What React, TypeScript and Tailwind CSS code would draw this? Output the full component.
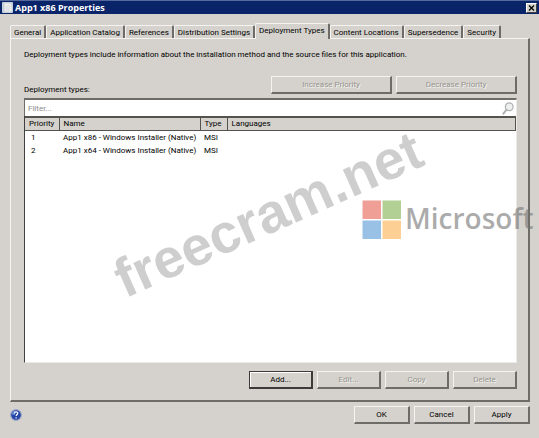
import { useState } from 'react'
import clsx from 'clsx'

interface DeploymentType {
  priority: number
  name: string
  type: string
  languages: string
}

const tabs = [
  'General',
  'Application Catalog',
  'References',
  'Distribution Settings',
  'Deployment Types',
  'Content Locations',
  'Supersedence',
  'Security',
]

const deploymentTypes: DeploymentType[] = [
  { priority: 1, name: 'App1 x86 - Windows Installer (Native)', type: 'MSI', languages: '' },
  { priority: 2, name: 'App1 x64 - Windows Installer (Native)', type: 'MSI', languages: '' },
]

interface DialogButtonProps {
  label: string
  className: string
  disabled?: boolean
  isDefault?: boolean
}

function DialogButton({ label, className, disabled, isDefault }: DialogButtonProps) {
  return (
    <button
      type="button"
      disabled={disabled}
      className={clsx(
        'h-[18px] border-t border-r-2 border-b-2 border-l bg-[#d5d2cd] text-center leading-[15px]',
        isDefault
          ? 'border-[#3c3b39] shadow-[inset_1px_1px_0_#fff]'
          : 'border-t-[#f4f3f0] border-r-[#6e6c68] border-b-[#6e6c68] border-l-[#f4f3f0]',
        disabled ? 'text-[#96948f] [text-shadow:1px_1px_0_#f4f3f0]' : 'text-black',
        className,
      )}
    >
      {label}
    </button>
  )
}

function AppIcon() {
  return (
    <svg viewBox="0 0 11 11" className="h-[11px] w-[11px]" aria-hidden="true">
      <rect width="11" height="11" rx="1" fill="#c9d3e2" />
      <path d="M2 1h6l2 2v7H2z" fill="#eef0f0" stroke="#b9bfca" strokeWidth="0.6" />
      <path d="M3.5 4h5M3.5 6h5M3.5 8h4" stroke="#c5c9d0" strokeWidth="0.7" />
    </svg>
  )
}

function SearchIcon() {
  return (
    <svg viewBox="0 0 12 13" className="h-[13px] w-3" aria-hidden="true">
      <circle cx="7.2" cy="4.8" r="3.9" fill="#eeefef" stroke="#b0b0b0" strokeWidth="1.2" />
      <path d="M4.4 7.8 1.4 11.6" stroke="#b0b0b0" strokeWidth="2" strokeLinecap="round" />
    </svg>
  )
}

function HelpIcon() {
  return (
    <svg viewBox="0 0 12 12" className="h-3 w-3" aria-hidden="true">
      <circle cx="6" cy="6" r="5.4" fill="#2344a6" stroke="#a3abc6" strokeWidth="1.2" />
      <path d="M1.8 5.4a4.2 4 0 0 1 4.2-3.8L4.6 6z" fill="#6488d8" />
      <path
        d="M4.4 4.6c0-2.3 3.4-2.2 3.4-.3 0 1.1-1.6 1.2-1.6 2.6M6.1 8.2v1.2"
        fill="none"
        stroke="#fff"
        strokeWidth="1.3"
      />
    </svg>
  )
}

function MicrosoftMark() {
  return (
    <div className="pointer-events-none absolute top-[200px] left-[362px] flex items-start gap-1">
      <svg viewBox="0 0 39 39" className="h-[39px] w-[39px]" aria-hidden="true">
        <rect x="0.5" y="0.5" width="18.5" height="18.5" fill="#ef9f96" />
        <rect x="20.5" y="0.5" width="18.5" height="18.5" fill="#b2cf94" />
        <rect x="0.5" y="20.5" width="18.5" height="18.5" fill="#99c1e5" />
        <rect x="20.5" y="20.5" width="18.5" height="18.5" fill="#fccf94" />
      </svg>
      <span className="font-['Open_Sans','Noto_Sans',sans-serif] text-[28px] leading-[37px] font-semibold text-[#737373]/60">
        Microsoft
      </span>
    </div>
  )
}

function App() {
  const [activeTab, setActiveTab] = useState('Deployment Types')
  const [filter, setFilter] = useState('')

  const rows = deploymentTypes.filter(d => d.name.toLowerCase().includes(filter.toLowerCase()))

  return (
    <div className="relative flex min-h-screen flex-col overflow-hidden bg-[#d5d2cd] font-[Roboto,'Liberation_Sans',sans-serif] text-[8px] leading-[13px] text-black">
      <header className="flex h-[14px] items-center gap-0.5 border-t border-[#56699c] bg-[#0a246a] pr-0.5 pl-0.5">
        <AppIcon />
        <h1 className="flex-1 font-['Open_Sans',sans-serif] text-[9px] leading-[12px] font-bold text-white">
          App1 x86 Properties
        </h1>
        <button
          type="button"
          aria-label="Close"
          className="flex h-[10px] w-[11px] items-center justify-center border border-t-white border-r-[#404040] border-b-[#404040] border-l-white bg-[#d5d2cd]"
        >
          <svg viewBox="0 0 7 6" className="h-1.5 w-[7px]" aria-hidden="true">
            <path d="M1 0.5 6 5.5M6 0.5 1 5.5" stroke="#000" strokeWidth="1.3" />
          </svg>
        </button>
      </header>

      <main className="flex flex-1 flex-col pt-2.5 pr-[9px] pl-2.5">
        <div role="tablist" className="flex h-[14px] items-end">
          {tabs.map(tab => (
            <button
              key={tab}
              type="button"
              role="tab"
              aria-selected={tab === activeTab}
              onClick={() => setActiveTab(tab)}
              className={clsx(
                'rounded-t-xs border-t border-r-2 border-l border-t-[#f4f3f0] border-r-[#6e6c68] border-l-[#f4f3f0] px-[3px] leading-[14px] whitespace-nowrap',
                tab === activeTab ? 'z-10 -mb-px h-4 bg-[#d5d2cd] pb-px' : 'h-[13px]',
              )}
            >
              {tab}
            </button>
          ))}
        </div>

        <section
          role="tabpanel"
          className="flex flex-1 flex-col border-t border-r-2 border-b-2 border-l border-t-[#f4f3f0] border-r-[#6e6c68] border-b-[#6e6c68] border-l-[#f4f3f0] pt-[9px] pr-[11px] pb-[11px] pl-[13px]"
        >
          <p>
            Deployment types include information about the installation method and the source files for
            this application.
          </p>

          <div className="mt-[15px] flex items-end justify-between">
            <label htmlFor="filter">Deployment types:</label>
            <div className="mb-0.5 flex gap-1">
              <DialogButton label="Increase Priority" className="w-[121px]" disabled />
              <DialogButton label="Decrease Priority" className="w-[121px]" disabled />
            </div>
          </div>

          <div className="mt-0.5 flex h-[18px] items-center border-t-2 border-r border-l border-t-[#6e6c68] border-r-[#eceae6] border-l-[#6e6c68] bg-white pr-0.5 pl-[3px]">
            <input
              id="filter"
              type="text"
              placeholder="Filter..."
              value={filter}
              onChange={e => setFilter(e.target.value)}
              className="flex-1 outline-none placeholder:text-[#8c8c8c]"
            />
            <SearchIcon />
          </div>

          <div className="flex-1 border-r border-b border-l border-r-[#eceae6] border-b-[#eceae6] border-l-[#404040] bg-white">
            <table className="w-full table-fixed border-collapse">
              <thead>
                <tr className="h-3 border-t-2 border-b border-[#55534f] bg-[#d5d2cd] text-left leading-[12px]">
                  <th className="w-[34px] border-r border-[#55534f] p-0 pl-1 font-normal">Priority</th>
                  <th className="w-[141px] border-r border-[#55534f] p-0 pl-1 font-normal">Name</th>
                  <th className="w-[27px] border-r border-[#55534f] p-0 pl-1 font-normal">Type</th>
                  <th className="border-r border-[#55534f] p-0 pl-1 font-normal">Languages</th>
                </tr>
              </thead>
              <tbody>
                {rows.map(row => (
                  <tr key={row.priority} className="h-[13px] whitespace-nowrap">
                    <td className="p-0 pl-1.5">{row.priority}</td>
                    <td className="p-0 pl-1">{row.name}</td>
                    <td className="p-0 pl-1">{row.type}</td>
                    <td className="p-0 pl-1">{row.languages}</td>
                  </tr>
                ))}
              </tbody>
            </table>
          </div>

          <div className="mt-2 flex justify-end gap-1">
            <DialogButton label="Add..." className="w-16" isDefault />
            <DialogButton label="Edit..." className="w-16" disabled />
            <DialogButton label="Copy" className="w-16" disabled />
            <DialogButton label="Delete" className="w-16" disabled />
          </div>
        </section>

        <footer className="flex items-center gap-1 pt-1 pb-3.5">
          <button type="button" aria-label="Help" className="mr-auto">
            <HelpIcon />
          </button>
          <DialogButton label="OK" className="w-14" />
          <DialogButton label="Cancel" className="w-14" />
          <DialogButton label="Apply" className="w-14" />
        </footer>
      </main>

      <div className="pointer-events-none absolute top-[184px] left-[103px] -rotate-24 font-['Liberation_Sans',sans-serif] text-[55px] leading-[60px] font-bold text-[#b4b4b4]/65">
        freecram.net
      </div>
      <MicrosoftMark />
    </div>
  )
}

export default App
